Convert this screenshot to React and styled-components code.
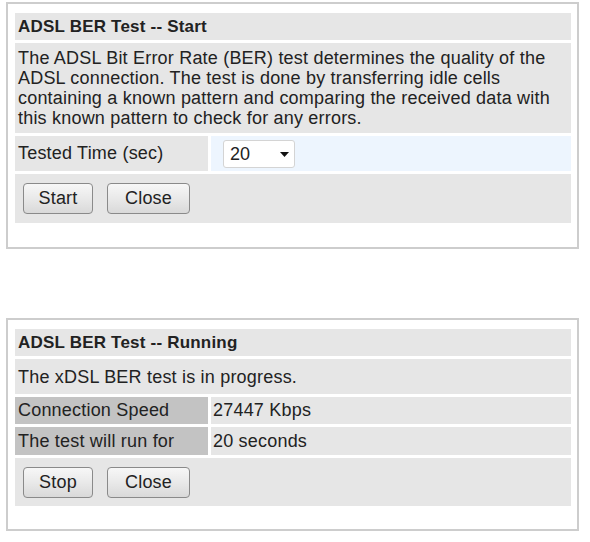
import React from "react";
import styled, { createGlobalStyle } from "styled-components";

const GlobalStyle = createGlobalStyle`
  html, body { margin: 0; padding: 0; background: #ffffff; }
  body {
    font-family: "Liberation Sans", Arial, sans-serif;
    font-size: 18px;
    letter-spacing: 0.2px;
    color: #222222;
  }
`;

const Page = styled.div`
  display: flex;
  flex-direction: column;
  gap: 69px;
  padding: 2px 11px 0 6px;
  width: 573px;
`;

const Panel = styled.section`
  box-sizing: border-box;
  width: 573px;
  border: 2px solid #cdcdcd;
  padding: 9px 6px ${(p) => p.$bottom || 24}px 7px;
  background: #ffffff;
`;

const Table = styled.div`
  display: flex;
  flex-direction: column;
  gap: 3px;
`;

const HeaderRow = styled.div`
  display: flex;
  align-items: center;
  box-sizing: border-box;
  height: 27px;
  padding: 0 3px;
  background: #e6e6e6;
  font-weight: bold;
  font-size: 17px;
`;

const TextRow = styled.div`
  box-sizing: border-box;
  min-height: ${(p) => p.$height}px;
  display: flex;
  align-items: center;
  padding: 5px 3px;
  background: #e6e6e6;
  line-height: 20px;
`;

const FieldRow = styled.div`
  display: grid;
  grid-template-columns: 193px 1fr;
  gap: 3px;
  height: ${(p) => p.$height}px;
`;

const LabelCell = styled.div`
  display: flex;
  align-items: center;
  padding: 0 3px;
  background: ${(p) => (p.$dark ? "#c3c3c3" : "#e6e6e6")};
`;

const ValueCell = styled.div`
  display: flex;
  align-items: center;
  padding: 0 ${(p) => p.$indent || 2}px;
  background: ${(p) => (p.$blue ? "#edf5fe" : "#e6e6e6")};
`;

const ButtonRow = styled.div`
  display: flex;
  align-items: center;
  gap: 14px;
  box-sizing: border-box;
  height: ${(p) => p.$height}px;
  padding: 0 8px;
  background: #e6e6e6;
`;

const Button = styled.button`
  box-sizing: border-box;
  height: 31px;
  width: ${(p) => p.$width}px;
  padding: 0;
  border: 1px solid #8a8a8a;
  border-radius: 4px;
  background: linear-gradient(#f7f7f7, #e9e9e9 50%, #d9d9d9);
  font-family: "Liberation Sans", Arial, sans-serif;
  font-size: 18px;
  letter-spacing: 0.2px;
  color: #222222;
  cursor: pointer;
`;

const SelectWrap = styled.div`
  position: relative;
  width: 72px;
  height: 28px;
`;

const Select = styled.select`
  appearance: none;
  -webkit-appearance: none;
  box-sizing: border-box;
  width: 100%;
  height: 100%;
  padding: 0 0 0 6px;
  border: 1px solid #d4d4d4;
  border-radius: 3px;
  background: #ffffff;
  font-family: "Liberation Sans", Arial, sans-serif;
  font-size: 18px;
  color: #222222;
`;

const Arrow = styled.svg`
  position: absolute;
  right: 6px;
  top: 12px;
  pointer-events: none;
`;

export default function App() {
  return (
    <>
      <GlobalStyle />
      <Page>
        <Panel $bottom={24}>
          <Table>
            <HeaderRow>ADSL BER Test -- Start</HeaderRow>
            <TextRow $height={90}>
              The ADSL Bit Error Rate (BER) test determines the quality of the
              ADSL connection. The test is done by transferring idle cells
              containing a known pattern and comparing the received data with
              this known pattern to check for any errors.
            </TextRow>
            <FieldRow $height={35}>
              <LabelCell>Tested Time (sec)</LabelCell>
              <ValueCell $blue $indent={12}>
                <SelectWrap>
                  <Select defaultValue="20">
                    <option>1</option>
                    <option>5</option>
                    <option>10</option>
                    <option>20</option>
                    <option>60</option>
                    <option>120</option>
                    <option>180</option>
                    <option>240</option>
                    <option>300</option>
                    <option>360</option>
                  </Select>
                  <Arrow width="9" height="5" viewBox="0 0 9 5">
                    <path d="M0 0 H9 L4.5 5 Z" fill="#111" />
                  </Arrow>
                </SelectWrap>
              </ValueCell>
            </FieldRow>
            <ButtonRow $height={49}>
              <Button $width={70}>Start</Button>
              <Button $width={83}>Close</Button>
            </ButtonRow>
          </Table>
        </Panel>

        <Panel $bottom={23}>
          <Table>
            <HeaderRow>ADSL BER Test -- Running</HeaderRow>
            <TextRow $height={35}>The xDSL BER test is in progress.</TextRow>
            <FieldRow $height={27}>
              <LabelCell $dark>Connection Speed</LabelCell>
              <ValueCell>27447 Kbps</ValueCell>
            </FieldRow>
            <FieldRow $height={28}>
              <LabelCell $dark>The test will run for</LabelCell>
              <ValueCell>20 seconds</ValueCell>
            </FieldRow>
            <ButtonRow $height={48}>
              <Button $width={70}>Stop</Button>
              <Button $width={83}>Close</Button>
            </ButtonRow>
          </Table>
        </Panel>
      </Page>
    </>
  );
}
